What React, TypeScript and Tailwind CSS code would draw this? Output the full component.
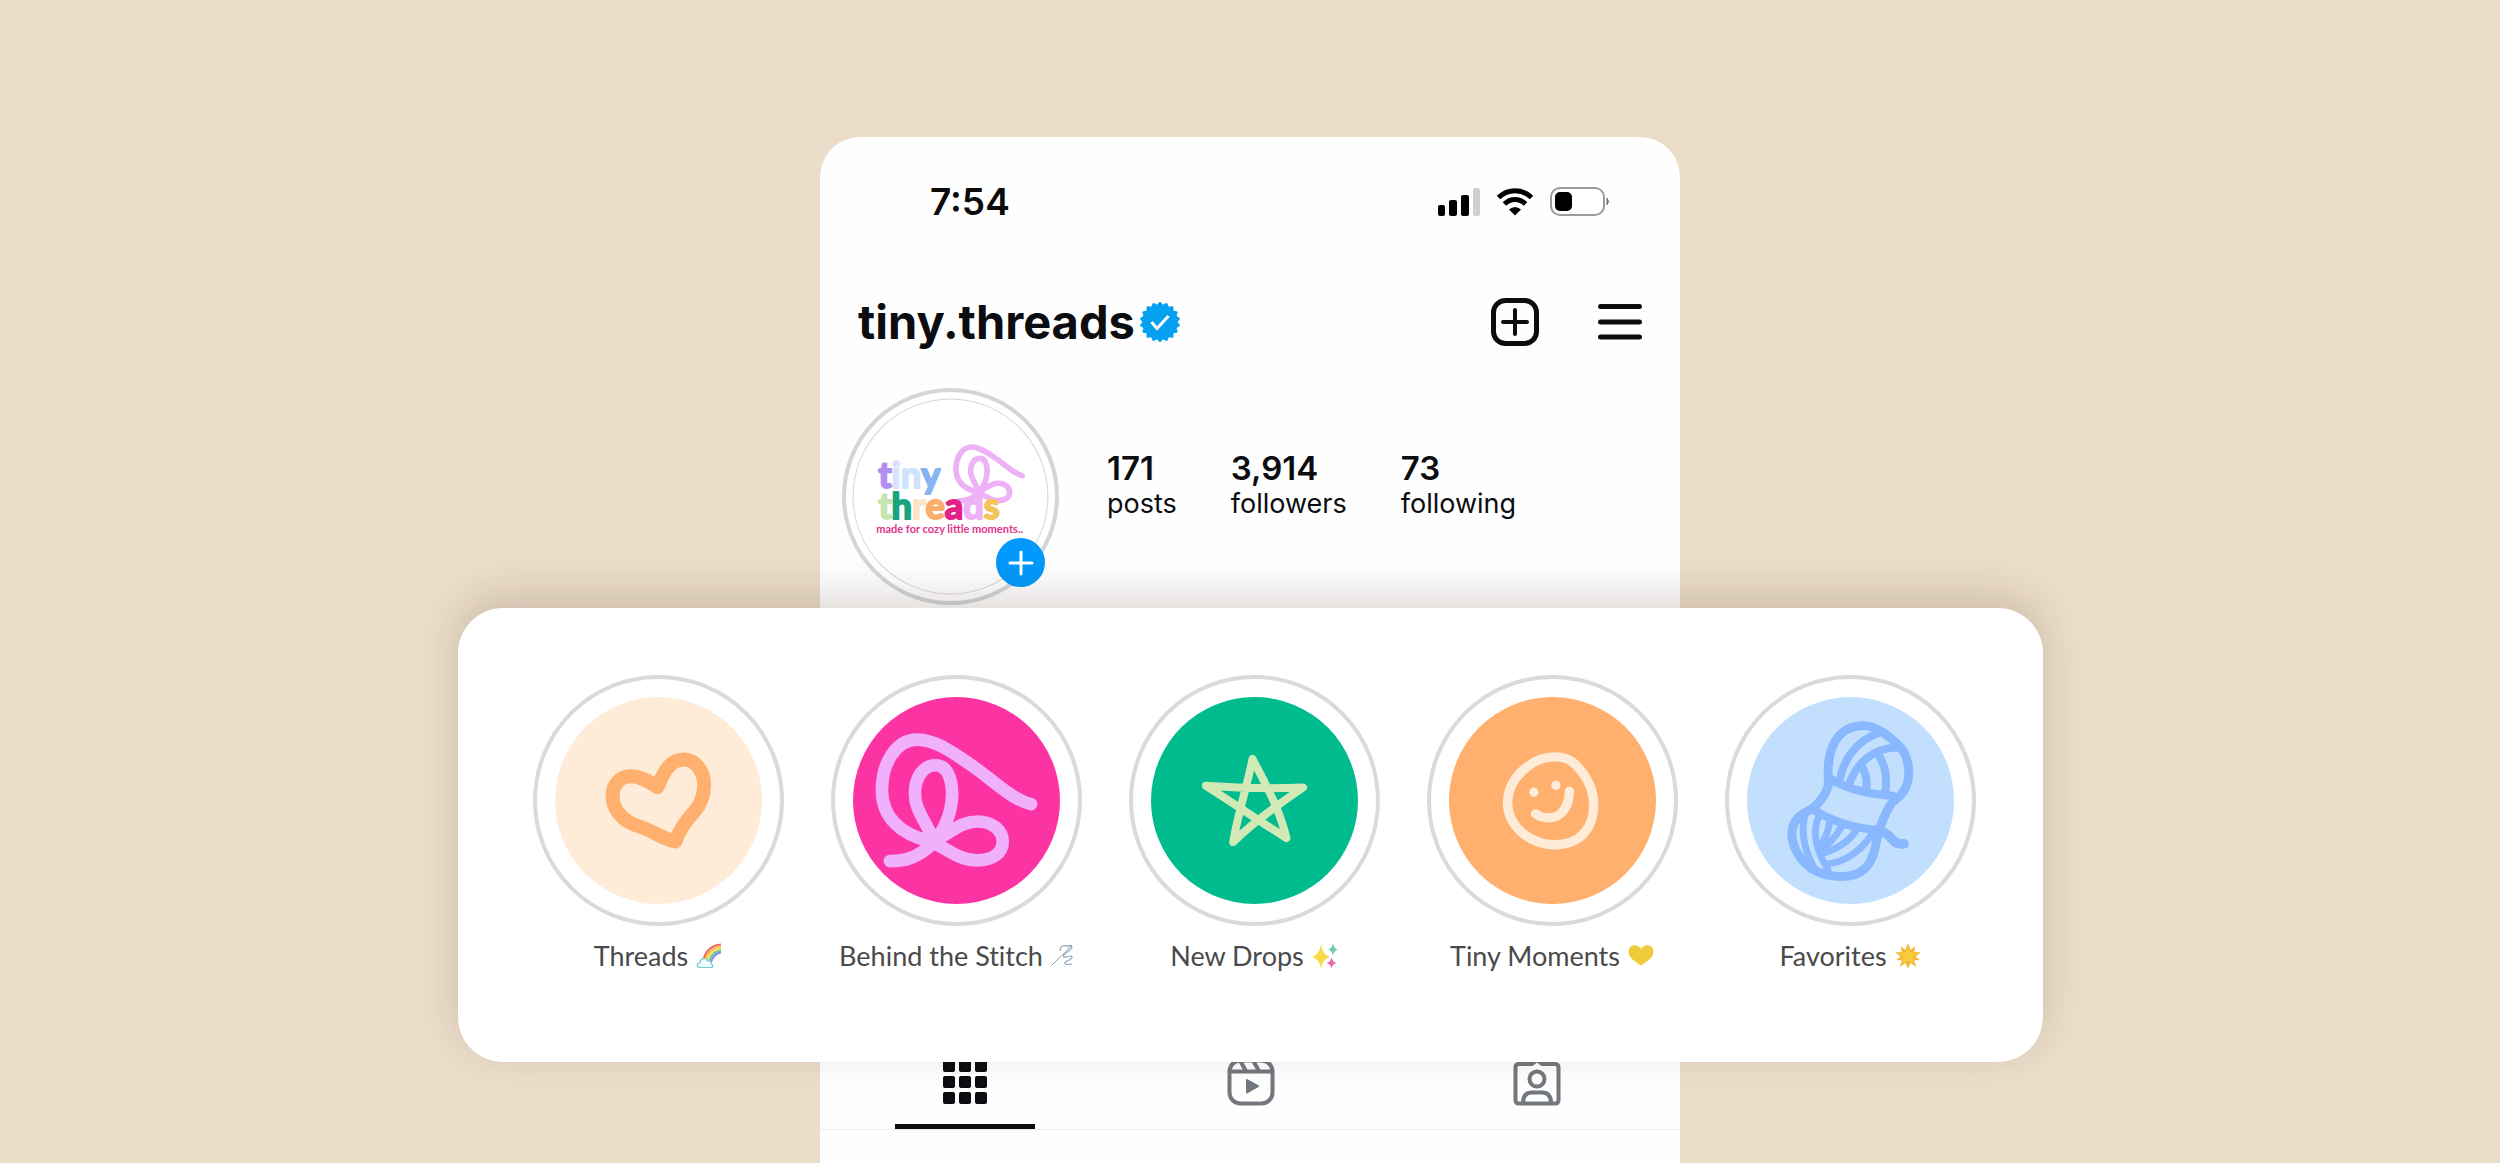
import { ReactNode, useState } from 'react';
import clsx from 'clsx';

interface Stat {
    value: string;
    label: string;
}

interface Highlight {
    id: string;
    label: string;
    circle: string; // background class of the cover
    viewBox: string;
    cover: ReactNode;
    emoji: ReactNode;
}

interface Tab {
    id: string;
    label: string;
    icon: ReactNode;
}

// one continuous thread, shared by the avatar and the "Behind the Stitch" cover
const THREAD_PATH =
    'M662 432 C600 417 540 352 470 306 C420 272 370 238 320 238 C255 238 214 310 214 390 C214 470 270 524 355 542 C405 560 440 601 500 601 C545 601 577 580 577 545 C577 510 545 484 500 484 C450 484 420 520 370 542 C345 480 313 450 313 400 C313 350 340 315 375 315 C410 315 425 355 425 405 C422 470 395 520 360 556 C320 592 285 603 238 603';

const stats: Stat[] = [
    { value: '171', label: 'posts' },
    { value: '3,914', label: 'followers' },
    { value: '73', label: 'following' },
];

const highlights: Highlight[] = [
    {
        id: 'threads',
        label: 'Threads',
        circle: 'bg-[#feecd8]',
        viewBox: '108 112 622 622',
        cover: (
            <path
                d="M416 383 C390 365 365 350 335 350 C303 350 281 375 281 410 C281 450 312 484 350 497 C400 511 425 537 470 546 C480 515 500 485 525 458 C545 437 556 410 556 375 C556 335 530 300 495 300 C460 300 440 330 430 352 Z"
                fill="none"
                stroke="#ffb06e"
                strokeWidth="42"
                strokeLinejoin="round"
            />
        ),
        emoji: (
            <svg viewBox="0 0 26 26" className="h-[26px] w-[26px]" fill="none">
                <path d="M8 15 C10 7 17 2 25 1.500" stroke="#e8604f" strokeWidth="2" />
                <path d="M9.500 16 C11.500 9 18 4.500 25 3.500" stroke="#f6b64a" strokeWidth="2" />
                <path d="M11 17 C13 11 19 6.500 25 5.500" stroke="#f3e14c" strokeWidth="2" />
                <path d="M13 18 C15 12.500 19.500 8.500 25 7.500" stroke="#6cc6a0" strokeWidth="2" />
                <path d="M15 19 C16.500 14 20.500 10.500 25 9.300" stroke="#7d8ff0" strokeWidth="2" />
                <path
                    d="M3.500 24.500 C.5 24 .5 20 4 20 C4 15 10 14 11.500 18 C14.500 17 15.500 19.500 15 21 C18 22 17 24.500 15 24.500 Z"
                    fill="#f4fdfe"
                    stroke="#6cc9d3"
                    strokeWidth="1.200"
                />
            </svg>
        ),
    },
    {
        id: 'stitch',
        label: 'Behind the Stitch',
        circle: 'bg-[#fc34a3]',
        viewBox: '127 110 622 622',
        cover: (
            <path
                d={THREAD_PATH}
                fill="none"
                stroke="#f1b0fb"
                strokeWidth="38"
                strokeLinecap="round"
                strokeLinejoin="round"
            />
        ),
        emoji: (
            <svg viewBox="0 0 22 26" className="h-[26px] w-[22px]" fill="none">
                <path d="M.5 22.500 L21 2.500" stroke="#8d99a3" strokeWidth="1" />
                <path
                    d="M9.500 8 C8 3.500 13 1.500 17 3.500 C20 1 22 3.500 20 6 C18 8.500 13.500 10 12.500 12.500 C12 15.500 17 13.500 20 13 C22.500 14 20 16.500 16 18 C12 20 13.500 22.500 21 21"
                    stroke="#8aa6bd"
                    strokeWidth="1.200"
                />
            </svg>
        ),
    },
    {
        id: 'drops',
        label: 'New Drops',
        circle: 'bg-[#00bb8d]',
        viewBox: '91 110 622 622',
        cover: (
            <path
                d="M396 296 C378 385 350 470 338 546 C400 485 470 435 548 382 C450 386 350 384 256 377 C340 430 420 485 498 534 C478 450 440 380 396 296 Z"
                fill="none"
                stroke="#d1e9b4"
                strokeWidth="24"
                strokeLinejoin="round"
            />
        ),
        emoji: (
            <svg viewBox="0 0 26 26" className="h-[26px] w-[26px]">
                <path d="M9 1 Q10.500 12 18 14 Q10.500 16 9 26 Q7.500 16 0 14 Q7.500 12 9 1Z" fill="#f9da4a" />
                <path d="M21 0 Q21.700 5.500 26 6.500 Q21.700 7.500 21 13 Q20.300 7.500 16 6.500 Q20.300 5.500 21 0Z" fill="#6bcdb4" />
                <path d="M19.500 14 Q20.200 19 24.500 20 Q20.200 21 19.500 26 Q18.800 21 14.500 20 Q18.800 19 19.500 14Z" fill="#ec6ab0" />
            </svg>
        ),
    },
    {
        id: 'moments',
        label: 'Tiny Moments',
        circle: 'bg-[#ffb06e]',
        viewBox: '85 117 622 622',
        cover: (
            <>
                <path
                    d="M402 297 C335 297 261 360 261 435 C261 510 335 561 402 561 C480 561 520 510 520 440 C520 390 492 347 470 325 C448 301 428 297 402 297 Z M447 400 C446 440 427 480 385 480 C365 480 352 474 345 468"
                    fill="none"
                    stroke="#feecd8"
                    strokeWidth="28"
                    strokeLinecap="round"
                    strokeLinejoin="round"
                />
                <circle cx="340" cy="403" r="14" fill="#feecd8" />
                <circle cx="406" cy="382" r="14" fill="#feecd8" />
            </>
        ),
        emoji: (
            <svg viewBox="0 0 26 26" className="h-[26px] w-[26px]">
                <path
                    d="M13 6 C10 .5 .5 1 .5 9 C.5 15 8 19 13 22.500 C18 19 25.500 15 25.500 9 C25.500 1 16 .5 13 6Z"
                    fill="#efcb3c"
                />
            </svg>
        ),
    },
    {
        id: 'favorites',
        label: 'Favorites',
        circle: 'bg-[#c2e0fd]',
        viewBox: '107 110 622 622',
        cover: (
            <g fill="none" stroke="#8ab8ff" strokeLinecap="round" strokeLinejoin="round">
                {/* skein outline */}
                <path
                    d="M352 366 C344 270 375 196 458 196 C500 198 530 225 565 258 C592 285 597 335 590 365 C580 403 560 412 542 428 C522 455 512 490 500 520 C494 560 488 598 462 625 C425 660 350 655 300 625 C255 592 234 540 245 500 C258 458 295 458 318 432 C338 410 352 390 352 366 Z"
                    strokeWidth="27"
                />
                {/* label band */}
                <path d="M352 352 C400 385 470 402 545 407 M306 448 C360 482 430 505 500 509" strokeWidth="25" />
                {/* strands */}
                <path
                    d="M386 358 C396 305 430 240 510 216 M416 366 C440 305 490 262 560 262 M450 316 C465 335 468 360 466 388 M502 284 C520 310 530 350 522 400"
                    strokeWidth="24"
                />
                <path
                    d="M282 462 C268 510 278 570 308 622 M322 470 C300 520 320 580 350 628 M345 612 C410 608 460 560 486 516 M332 580 C375 568 415 545 438 506 M358 478 C350 510 345 540 322 560 M392 498 C378 520 368 540 340 560"
                    strokeWidth="21"
                />
                <path d="M504 515 C545 515 535 556 579 551" strokeWidth="29" />
            </g>
        ),
        emoji: (
            <svg viewBox="0 0 26 26" className="h-[26px] w-[26px]">
                <path
                    d="M13 0 L15.800 7 L20 3 L19.500 9 L26 9.500 L20.500 13.500 L25 17 L19 17.200 L21.500 24 L15.500 20 L13 26 L10.500 20 L4.500 24 L7 17.200 L1 17 L5.500 13.500 L0 9.500 L6.500 9 L6 3 L10.200 7 Z"
                    fill="#f2b93b"
                />
                <path
                    d="M13 4 L15.500 9.500 L21.500 10.500 L17.500 14.500 L18.500 20.500 L13 17.500 L7.500 20.500 L8.500 14.500 L4.500 10.500 L10.500 9.500 Z"
                    fill="#fbcc3d"
                />
            </svg>
        ),
    },
];

const tabs: Tab[] = [
    {
        id: 'grid',
        label: 'Posts',
        icon: (
            <svg viewBox="0 0 48 48" className="h-12 w-12" fill="#0b0d10">
                {[2, 18, 34].map((y) =>
                    [2, 18, 34].map((x) => (
                        <rect key={`${x}-${y}`} x={x} y={y} width="12" height="12" rx="2" />
                    )),
                )}
            </svg>
        ),
    },
    {
        id: 'reels',
        label: 'Reels',
        icon: (
            <svg viewBox="0 0 48 48" className="h-12 w-12" fill="none" stroke="#73777e" strokeWidth="4">
                <rect x="2.500" y="2.500" width="43" height="43" rx="11" />
                <path d="M2.500 13.500 H45.500 M13 2.500 L19 13 M26 2.500 L32 13" />
                <path d="M20 22 V34.500 L31 28.200 Z" fill="#73777e" stroke="#73777e" strokeWidth="2" strokeLinejoin="round" />
            </svg>
        ),
    },
    {
        id: 'tagged',
        label: 'Tagged',
        icon: (
            <svg viewBox="0 0 48 48" className="h-12 w-12" fill="none" stroke="#73777e" strokeWidth="4" strokeLinejoin="round">
                <path d="M6 6 H19 L24 2 L29 6 H42 Q45.500 6 45.500 9.500 V42 Q45.500 45.500 42 45.500 H6 Q2.500 45.500 2.500 42 V9.500 Q2.500 6 6 6 Z" />
                <circle cx="24" cy="21" r="7.500" />
                <path d="M10 45 C10 37 14 34.500 19 34.500 H29 C34 34.500 38 37 38 45" />
            </svg>
        ),
    },
];

const StatusBar = () => (
    <div className="flex h-12 items-center justify-between pr-[70px] pl-[110px]">
        <span className="text-[37px] font-semibold text-[#0b0b0c]">7:54</span>
        <div className="flex items-center gap-[17px]">
            <svg viewBox="0 0 42 28" className="h-7 w-[42px]">
                <rect x="0" y="17" width="7" height="11" rx="2" />
                <rect x="11" y="12" width="8" height="16" rx="2" />
                <rect x="23" y="7" width="8" height="21" rx="2" />
                <rect x="35" y="0" width="7" height="28" rx="2" fill="#cfcfcf" />
            </svg>
            <svg viewBox="0 0 36 28" className="h-7 w-9" fill="none" stroke="#000" strokeWidth="5">
                <path d="M1.500 9.500 C11 .5 25 .5 34.500 9.500" />
                <path d="M7.500 16 C13.500 10 22.500 10 28.500 16" />
                <path d="M12 21.500 Q18 16.500 24 21.500 L18 27.500 Z" fill="#000" stroke="none" />
            </svg>
            <svg viewBox="0 0 60 30" className="h-[30px] w-[60px]">
                <rect x="1" y="1" width="53" height="27" rx="9" fill="#fff" stroke="#9b9b9b" strokeWidth="2" />
                <rect x="5" y="5" width="17" height="19" rx="5" />
                <path d="M57 11 Q60 14.500 57 18 Z" fill="#777" stroke="#777" />
            </svg>
        </div>
    </div>
);

// 18-point scalloped badge
const VerifiedBadge = () => {
    const points = Array.from({ length: 36 }, (_, i) => {
        const r = i % 2 === 0 ? 20 : 17;
        const a = (i * Math.PI) / 18;
        return `${(21 + r * Math.sin(a)).toFixed(1)},${(21 - r * Math.cos(a)).toFixed(1)}`;
    }).join(' ');

    return (
        <svg viewBox="0 0 42 42" className="h-[42px] w-[42px]" role="img" aria-label="Verified">
            <polygon points={points} fill="#05a0f0" stroke="#05a0f0" strokeWidth="1" strokeLinejoin="round" />
            <path d="M12.500 21 L18 27.500 L29.500 15" fill="none" stroke="#fff" strokeWidth="3" />
        </svg>
    );
};

const Avatar = () => (
    <div className="relative">
        <svg viewBox="12 13 216 216" className="h-[217px] w-[217px]" fontFamily="Lato, sans-serif">
            <circle cx="120" cy="121" r="106" fill="#fff" stroke="#d3d6d7" strokeWidth="4" />
            <circle cx="120" cy="121" r="97" fill="none" stroke="#d5d5d5" strokeWidth="1" />
            <path
                d={THREAD_PATH}
                transform="translate(94 36.700) scale(.147)"
                fill="none"
                stroke="#edb1f6"
                strokeWidth="38"
                strokeLinecap="round"
                strokeLinejoin="round"
            />
            <text fontSize="36" fontWeight="700" strokeWidth="2" strokeLinejoin="round">
                <tspan x="48" y="113" fill="#b18ff0" stroke="#b18ff0">t</tspan>
                <tspan fill="#dbe2fd" stroke="#dbe2fd">i</tspan>
                <tspan fill="#cfe3fb" stroke="#cfe3fb">n</tspan>
                <tspan fill="#87b4f3" stroke="#87b4f3">y</tspan>
                <tspan x="48" y="143" fill="#c6e3b2" stroke="#c6e3b2">t</tspan>
                <tspan fill="#16a57c" stroke="#16a57c">h</tspan>
                <tspan fill="#fde3c8" stroke="#fde3c8">r</tspan>
                <tspan fill="#fbad6b" stroke="#fbad6b">e</tspan>
                <tspan fill="#e51f86" stroke="#e51f86">a</tspan>
                <tspan fill="#edb1f6" stroke="#edb1f6">d</tspan>
                <tspan fill="#f3c55c" stroke="#f3c55c">s</tspan>
            </text>
            <text x="46" y="157" fontSize="11" fontWeight="700" fill="#e0348d">
                made for cozy little moments..
            </text>
        </svg>
        <button
            type="button"
            aria-label="Add story"
            className="absolute right-[14px] bottom-[18px] flex h-[49px] w-[49px] items-center justify-center rounded-full bg-[#0398fb]"
        >
            <svg viewBox="0 0 26 26" className="h-[26px] w-[26px]" stroke="#fff" strokeWidth="3" strokeLinecap="round">
                <path d="M13 2 V24 M2 13 H24" />
            </svg>
        </button>
    </div>
);

const HighlightItem = ({ label, circle, viewBox, cover, emoji }: Highlight) => (
    <button type="button" className="flex w-[251px] flex-col items-center gap-3">
        <span className="flex h-[251px] w-[251px] items-center justify-center rounded-full border-4 border-[#dadadb]">
            <span className={clsx('block h-[207px] w-[207px] rounded-full', circle)}>
                <svg viewBox={viewBox} className="h-full w-full">
                    {cover}
                </svg>
            </span>
        </span>
        <span className="flex h-9 items-center gap-2 font-[Lato,sans-serif] text-[27px] whitespace-nowrap text-[#4a4a4b] [font-variant-ligatures:none]">
            {label}
            {emoji}
        </span>
    </button>
);

const App = () => {
    const [activeTab, setActiveTab] = useState<string>('grid');

    return (
        <main className="flex min-h-screen flex-col items-center overflow-hidden bg-[#ebddca] pt-[137px] font-[Inter,sans-serif] text-[#0b0d10]">
            <section className="w-[34.4%] min-w-[760px] rounded-t-[40px] bg-[#fefefe] pt-[41px] pb-[3px]">
                <StatusBar />

                <header className="mt-[66px] flex h-[60px] items-center justify-between pr-[38px] pl-[38px]">
                    <div className="flex items-center gap-1">
                        <h1 className="text-[47px] font-bold">tiny.threads</h1>
                        <VerifiedBadge />
                    </div>
                    <div className="flex items-center gap-[59px]">
                        <button type="button" aria-label="New post">
                            <svg viewBox="0 0 48 48" className="h-12 w-12" fill="none" stroke="#0b0d10" strokeWidth="5" strokeLinecap="round">
                                <rect x="2.500" y="2.500" width="43" height="43" rx="12" />
                                <path d="M24 12 V36 M12 24 H36" strokeWidth="4" />
                            </svg>
                        </button>
                        <button type="button" aria-label="Menu">
                            <svg viewBox="0 0 44 48" className="h-12 w-11" stroke="#0b0d10" strokeWidth="5" strokeLinecap="round">
                                <path d="M2.500 8.500 H41.500 M2.500 24 H41.500 M2.500 39 H41.500" />
                            </svg>
                        </button>
                    </div>
                </header>

                <div className="mt-9 flex items-center gap-12 pl-[22px]">
                    <Avatar />
                    <dl className="flex gap-[54px] pb-[22px] leading-9">
                        {stats.map((stat) => (
                            <div key={stat.label} className="flex flex-col-reverse">
                                <dt className="text-[27px]">{stat.label}</dt>
                                <dd className="text-[33px] font-semibold">{stat.value}</dd>
                            </div>
                        ))}
                    </dl>
                </div>
            </section>

            <section className="relative z-10 flex w-[63.4%] min-w-[1520px] justify-center gap-[47px] rounded-[45px] bg-white pt-[67px] pb-[88px] pl-2 shadow-[0_-12px_40px_rgba(60,30,20,0.17)]">
                {highlights.map((highlight) => (
                    <HighlightItem key={highlight.id} {...highlight} />
                ))}
            </section>

            <section className="-mt-1 w-[34.4%] min-w-[760px] flex-1 bg-[#fefefe]">
                <nav className="grid grid-cols-3 border-b border-[#ececee] pl-[2px]">
                    {tabs.map((tab) => (
                        <button
                            key={tab.id}
                            type="button"
                            aria-label={tab.label}
                            onClick={() => setActiveTab(tab.id)}
                            className="flex flex-col items-center gap-[18px]"
                        >
                            {tab.icon}
                            <span className={clsx('h-[5px] w-[140px]', activeTab === tab.id && 'bg-[#0b0d10]')} />
                        </button>
                    ))}
                </nav>
            </section>
        </main>
    );
};

export default App;
